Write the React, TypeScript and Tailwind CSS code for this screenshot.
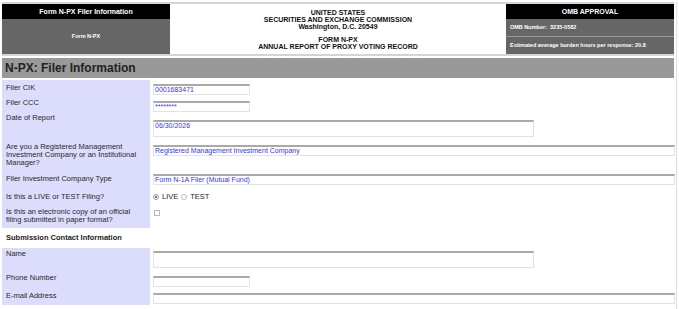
const font = { fontFamily: '"Liberation Sans", Arial, sans-serif' };

function TextBox(props: { value?: string; width: string; tall?: boolean }) {
    return (
        <div
            className={`${props.width} ${props.tall ? "h-[17px]" : "h-[11px]"} border border-[#e2e2e2] border-t-[#a9a9a9] border-t-2 bg-white px-[1px] text-[7px] leading-[8px] text-[#3333ff]`}
        >
            {props.value}
        </div>
    );
}

function Row(props: { label: React.ReactNode; children?: React.ReactNode; h: string; labelPt: string; valuePt: string }) {
    return (
        <div className={`flex ${props.h}`}>
            <div className={`w-[148px] shrink-0 bg-[#dcdcfc] px-[4px] ${props.labelPt} text-[7.5px] leading-[8px] text-[#2a2a2a]`}>
                {props.label}
            </div>
            <div className={`flex-1 pl-[3px] ${props.valuePt}`}>{props.children}</div>
        </div>
    );
}

export default function App() {
    return (
        <div className="w-[679px] h-[309px] bg-white overflow-hidden" style={font}>
            <div className="w-[677px] h-full border-r border-[#f3d7dc] px-[2px]">
                {/* header */}
                <div className="mt-[2px] flex h-[54px] border-y-2 border-[#d4d4d4]">
                    <div className="flex w-[168px] flex-col">
                        <div className="h-[15px] bg-black text-center text-[7px] font-bold leading-[15px] text-white">
                            Form N-PX Filer Information
                        </div>
                        <div className="flex flex-1 items-center justify-center bg-[#666] text-[5.5px] font-bold text-white">
                            Form N-PX
                        </div>
                    </div>
                    <div className="flex flex-1 flex-col items-center pt-[5px] text-[7px] font-bold leading-[7px] text-[#111]">
                        <div>UNITED STATES</div>
                        <div>SECURITIES AND EXCHANGE COMMISSION</div>
                        <div>Washington, D.C. 20549</div>
                        <div className="mt-[6px]">FORM N-PX</div>
                        <div>ANNUAL REPORT OF PROXY VOTING RECORD</div>
                    </div>
                    <div className="flex w-[168px] flex-col">
                        <div className="h-[15px] bg-black text-center text-[7px] font-bold leading-[15px] text-white">
                            OMB APPROVAL
                        </div>
                        <div className="flex h-[18px] items-center border-b border-[#999] bg-[#666] pl-[4px] text-[5.5px] font-bold text-white">
                            OMB Number:&nbsp; 3235-0582
                        </div>
                        <div className="flex flex-1 items-center bg-[#666] pl-[4px] text-[5.5px] font-bold text-white">
                            Estimated average burden hours per response: 20.8
                        </div>
                    </div>
                </div>

                {/* title */}
                <div className="mt-[2px] h-[20px] bg-[#999] pl-[3px] text-[12px] font-bold leading-[20px] text-[#222]">
                    N-PX: Filer Information
                </div>

                <div className="mt-[2px]">
                    <Row label="Filer CIK" h="h-[15px]" labelPt="pt-[4px]" valuePt="pt-[4px]">
                        <TextBox width="w-[97px]" value="0001683471" />
                    </Row>
                    <Row label="Filer CCC" h="h-[16px]" labelPt="pt-[4px]" valuePt="pt-[6px]">
                        <TextBox width="w-[97px]" value="********" />
                    </Row>
                    <Row label="Date of Report" h="h-[30px]" labelPt="pt-[3px]" valuePt="pt-[9px]">
                        <TextBox width="w-[381px]" tall value="06/30/2026" />
                    </Row>
                    <Row
                        h="h-[29px]"
                        labelPt="pt-[2px]"
                        valuePt="pt-[4px]"
                        label={<>Are you a Registered Management<br />Investment Company or an Institutional<br />Manager?</>}
                    >
                        <TextBox width="w-[522px]" value="Registered Management Investment Company" />
                    </Row>
                    <Row label="Filer Investment Company Type" h="h-[18px]" labelPt="pt-[5px]" valuePt="pt-[4px]">
                        <TextBox width="w-[522px]" value="Form N-1A Filer (Mutual Fund)" />
                    </Row>
                    <Row label="Is this a LIVE or TEST Filing?" h="h-[17px]" labelPt="pt-[5px]" valuePt="pt-[5px]">
                        <div className="flex items-center gap-[3px] text-[7.5px] leading-[8px] text-[#222]">
                            <span className="block h-[6px] w-[6px] rounded-full border border-[#999] bg-white p-[1px]">
                                <span className="block h-full w-full rounded-full bg-[#444]" />
                            </span>
                            <span>LIVE</span>
                            <span className="block h-[6px] w-[6px] rounded-full border border-[#bbb] bg-white" />
                            <span>TEST</span>
                        </div>
                    </Row>
                    <Row
                        h="h-[23px]"
                        labelPt="pt-[3px]"
                        valuePt="pt-[5px]"
                        label={<>Is this an electronic copy of an official<br />filing submitted in paper format?</>}
                    >
                        <span className="ml-[1px] block h-[6px] w-[6px] border border-[#bbb] bg-white" />
                    </Row>
                    <div className="h-[20px] pl-[4px] pt-[6px] text-[7.5px] font-bold leading-[8px] text-[#222]">
                        Submission Contact Information
                    </div>
                    <Row label="Name" h="h-[22px]" labelPt="pt-[2px]" valuePt="pt-[3px]">
                        <TextBox width="w-[381px]" tall />
                    </Row>
                    <Row label="Phone Number" h="h-[18px]" labelPt="pt-[4px]" valuePt="pt-[6px]">
                        <TextBox width="w-[97px]" />
                    </Row>
                    <Row label="E-mail Address" h="h-[17px]" labelPt="pt-[4px]" valuePt="pt-[5px]">
                        <TextBox width="w-[522px]" />
                    </Row>
                </div>
            </div>
        </div>
    );
}
